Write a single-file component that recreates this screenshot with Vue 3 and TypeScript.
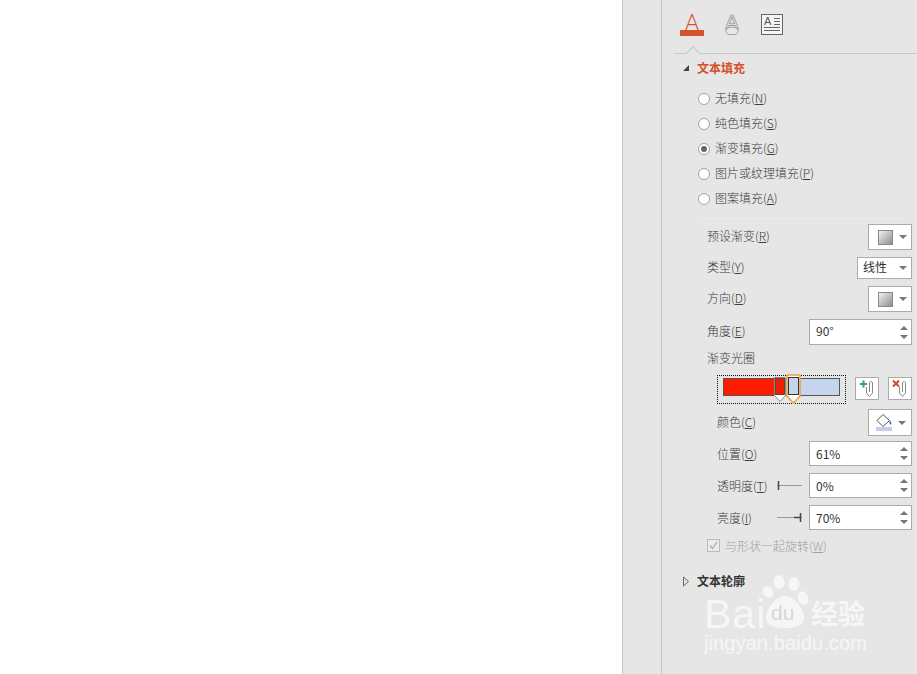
<script setup lang="ts">
interface FillOption {
  label: string;
  key: string;
  checked?: boolean;
}

interface SpinRow {
  label: string;
  key: string;
  value: string;
  slider?: "low" | "high";
}

const fillOptions: FillOption[] = [
  { label: "无填充", key: "N" },
  { label: "纯色填充", key: "S" },
  { label: "渐变填充", key: "G", checked: true },
  { label: "图片或纹理填充", key: "P" },
  { label: "图案填充", key: "A" },
];

const spinRows: SpinRow[] = [
  { label: "位置", key: "O", value: "61%" },
  { label: "透明度", key: "T", value: "0%", slider: "low" },
  { label: "亮度", key: "I", value: "70%", slider: "high" },
];
</script>

<template>
  <div class="page">
    <div class="canvas"></div>
    <div class="strip"></div>
    <aside class="panel">
      <div class="tabs">
        <div class="tab-fill">
          <span class="big-a">A</span>
          <span class="big-a-bar"></span>
        </div>
        <svg class="tab-icon" width="18" height="24" viewBox="0 0 18 24">
          <text x="9" y="17" text-anchor="middle" class="outline-a">A</text>
          <path d="M2.500 19l2.500-3.500h8l2.500 3.500-2.500 3.500H5z" fill="none" stroke="#a8a8a8" />
        </svg>
        <svg class="tab-icon box-icon" width="22" height="21" viewBox="0 0 22 21">
          <rect x="0.500" y="0.500" width="21" height="20" fill="#f4f4f4" stroke="#666" />
          <text x="3" y="11" class="box-a">A</text>
          <path d="M13 4.500h6M13 7.500h6M13 10.500h6M3 13.500h16M3 16.500h16" stroke="#666" fill="none" />
        </svg>
        <span class="notch"></span>
      </div>

      <div class="section-head open">
        <svg width="8" height="8" viewBox="0 0 8 8"><path d="M7 1v6H1z" fill="#444" /></svg>
        <b>文本填充</b>
      </div>

      <div class="options">
        <div v-for="opt in fillOptions" :key="opt.key" class="option">
          <span class="radio" :class="{ on: opt.checked }"></span>
          <span class="option-text">{{ opt.label }}(<u>{{ opt.key }}</u>)</span>
        </div>
      </div>
      <div class="faint-line"></div>

      <div class="form">
        <div class="row">
          <span class="row-label">预设渐变(<u>R</u>)</span>
          <div class="pick">
            <span class="swatch"></span>
            <span class="caret"></span>
          </div>
        </div>
        <div class="row">
          <span class="row-label">类型(<u>Y</u>)</span>
          <div class="select">
            <span class="row-label">线性</span>
            <span class="caret"></span>
          </div>
        </div>
        <div class="row">
          <span class="row-label">方向(<u>D</u>)</span>
          <div class="pick">
            <span class="swatch"></span>
            <span class="caret"></span>
          </div>
        </div>
        <div class="row angle">
          <span class="row-label">角度(<u>E</u>)</span>
          <div class="spin">
            <span class="row-label">90°</span>
            <span class="arrows"><i class="up"></i><i class="down"></i></span>
          </div>
        </div>
        <div class="stops-label">渐变光圈</div>

        <div class="stops-row">
          <div class="stops">
            <div class="bar">
              <span class="bar-red"></span>
              <span class="bar-blue"></span>
            </div>
            <svg class="stop stop-a" width="12" height="26" viewBox="0 0 12 26">
              <path d="M0.500 0.500h11v18l-5.500 6-5.500-6z" fill="#fff" stroke="#8a8a8a" />
              <rect x="1.500" y="1.500" width="9" height="16" fill="#f41c00" stroke="#333" stroke-width="0.800" />
            </svg>
            <svg class="stop stop-b" width="15" height="30" viewBox="0 0 15 30">
              <path d="M1 1h13v21l-6.500 7L1 22z" fill="#fff" stroke="#eba23e" stroke-width="1.600" />
              <rect x="2.500" y="3.500" width="10" height="17" fill="#c5d5ee" stroke="#333" />
            </svg>
          </div>
          <div class="stop-btn">
            <svg width="19" height="19" viewBox="0 0 19 19">
              <path d="M2 5h7M5.500 1.500v7" stroke="#3a9a88" stroke-width="2" fill="none" />
              <path d="M8.500 8v6l3 3.500 3-3.500V4c0-2-3-2-3 0v9" stroke="#888" fill="none" />
            </svg>
          </div>
          <div class="stop-btn">
            <svg width="19" height="19" viewBox="0 0 19 19">
              <path d="M2 1.500l6 6M8 1.500l-6 6" stroke="#d9452c" stroke-width="2" fill="none" />
              <path d="M8.500 8v6l3 3.500 3-3.500V4c0-2-3-2-3 0v9" stroke="#888" fill="none" />
            </svg>
          </div>
        </div>

        <div class="row inner color-row">
          <span class="row-label">颜色(<u>C</u>)</span>
          <div class="pick">
            <svg width="19" height="19" viewBox="0 0 19 19">
              <path d="M8 1.500l6.500 6-6.500 6-6-6z" fill="#fff" stroke="#555" />
              <path d="M14.500 7c1.500 1.500 2.500 3.500 1.500 4.500s-2-2-1.500-4.500z" fill="#2a6fb5" />
              <rect x="1" y="14" width="16" height="4" fill="#c9cce8" />
            </svg>
            <span class="caret"></span>
          </div>
        </div>

        <div v-for="row in spinRows" :key="row.key" class="row inner spin-row">
          <span>{{ row.label }}(<u>{{ row.key }}</u>)</span>
          <div class="spin-wrap">
            <svg v-if="row.slider" class="slider" width="26" height="11" viewBox="0 0 26 11">
              <path d="M0 5.500h25" stroke="#999" fill="none" />
              <path
                :d="row.slider === 'low' ? 'M1.500 1v9' : 'M23.500 1v9M17 5.500h6'"
                stroke="#444"
                stroke-width="1.500"
                fill="none"
              />
            </svg>
            <div class="spin">
              <span>{{ row.value }}</span>
              <span class="arrows"><i class="up"></i><i class="down"></i></span>
            </div>
          </div>
        </div>

        <div class="rotate">
          <svg width="13" height="13" viewBox="0 0 13 13">
            <rect x="0.500" y="0.500" width="12" height="12" fill="#ececec" stroke="#bbb" />
            <path d="M3 6.500l2.500 3L10 3" stroke="#aaa" stroke-width="1.200" fill="none" />
          </svg>
          <span>与形状一起旋转(<u>W</u>)</span>
        </div>
      </div>

      <div class="section-head closed">
        <svg width="8" height="11" viewBox="0 0 8 11"><path d="M1.500 1l5 4.500-5 4.500z" fill="none" stroke="#666" /></svg>
        <b>文本轮廓</b>
      </div>

      <div class="watermark">
        <div class="mark-top">
          <span class="mark-bai">Bai</span>
          <div class="paw">
            <svg width="46" height="54" viewBox="0 0 46 54">
              <ellipse cx="17" cy="7" rx="5.500" ry="7" />
              <ellipse cx="32" cy="9" rx="5.500" ry="7" />
              <ellipse cx="6" cy="17" rx="5" ry="6" transform="rotate(-25 6 17)" />
              <ellipse cx="41" cy="23" rx="5" ry="7" transform="rotate(-20 41 23)" />
              <path d="M23 21c9 0 19 12 19 22 0 8-9 10-19 10S4 51 4 43c0-10 10-22 19-22z" />
            </svg>
            <span class="mark-du">du</span>
          </div>
          <span class="mark-cn">经验</span>
        </div>
        <div class="mark-url">jingyan.baidu.com</div>
      </div>
    </aside>
  </div>
</template>

<style scoped>
.page {
  display: flex;
  width: 917px;
  height: 674px;
  overflow: hidden;
  background: #e6e6e6;
  font-family: "Noto Sans CJK SC", "Liberation Sans", sans-serif;
  font-size: 12px;
  font-weight: 300;
  color: #3c3c3c;
}

u {
  text-underline-offset: 1px;
}

.canvas {
  width: 622px;
  flex: none;
  background: #fff;
}

.strip {
  width: 38px;
  flex: none;
  border-left: 1px solid #c6c6c6;
}

.panel {
  position: relative;
  flex: 1;
  border-left: 1px solid #c6c6c6;
}

.tabs {
  position: relative;
  display: flex;
  align-items: flex-start;
  height: 41px;
  margin-left: 12px;
  padding: 12px 0 0 6px;
  border-bottom: 1px solid #c8c8c8;
}

.tab-fill {
  display: flex;
  flex-direction: column;
  width: 24px;
}

.big-a {
  height: 18px;
  font-family: "Open Sans", sans-serif;
  font-size: 25px;
  font-weight: 300;
  line-height: 20px;
  text-align: center;
  color: #d4532b;
}

.big-a-bar {
  height: 6px;
  background: #d4532b;
}

.tab-icon {
  margin-left: 19px;
}

.box-icon {
  margin-left: 20px;
  margin-top: 2px;
}

.outline-a {
  font-family: "Liberation Sans", sans-serif;
  font-size: 20px;
  fill: #f2f2f2;
  stroke: #8a8a8a;
  stroke-width: 0.700;
}

.box-a {
  font-family: "Liberation Sans", sans-serif;
  font-size: 11px;
  fill: #555;
}

.notch {
  position: absolute;
  left: 14px;
  bottom: -5px;
  width: 9px;
  height: 9px;
  background: #e6e6e6;
  border-top: 1px solid #c8c8c8;
  border-left: 1px solid #c8c8c8;
  transform: rotate(45deg);
}

.section-head {
  display: flex;
  align-items: center;
  gap: 7px;
  height: 27px;
  padding-left: 20px;
}

.section-head b {
  font-weight: 700;
  font-size: 12px;
  padding-bottom: 1px;
}

.section-head.open {
  color: #d2502a;
}

.section-head.closed {
  margin-top: 18px;
  height: 20px;
  color: #333;
}

.options {
  margin-top: 5px;
  padding-left: 36px;
}

.option {
  display: flex;
  align-items: center;
  gap: 5px;
  height: 25px;
}

.option-text {
  padding-bottom: 2px;
}

.radio {
  position: relative;
  width: 10px;
  height: 10px;
  border: 1px solid #a2a2a2;
  border-radius: 50%;
  background: #fff;
}

.radio.on::after {
  content: "";
  position: absolute;
  left: 2px;
  top: 2px;
  width: 6px;
  height: 6px;
  border-radius: 50%;
  background: #666;
}

.faint-line {
  height: 1px;
  margin: 7px 12px 0 36px;
  background: #ebebeb;
}

.form {
  padding: 5px 5px 0 45px;
}

.row {
  display: flex;
  align-items: center;
  justify-content: space-between;
  height: 26px;
  margin-bottom: 5px;
}

.row-label {
  padding-bottom: 3px;
}

.row.angle {
  margin-top: 7px;
  margin-bottom: 0;
}

.row.inner {
  margin-left: 10px;
}

.pick,
.select,
.spin,
.stop-btn {
  display: flex;
  align-items: center;
  box-sizing: border-box;
  background: #fff;
  border: 1px solid #ababab;
}

.pick {
  gap: 6px;
  width: 44px;
  height: 26px;
  padding-left: 9px;
}

.swatch {
  width: 13px;
  height: 13px;
  border: 1px solid #888;
  background: linear-gradient(135deg, #f2f2f2, #8f8f8f);
}

.select {
  justify-content: space-between;
  width: 55px;
  height: 22px;
  padding: 0 4px 0 5px;
  color: #333;
  font-weight: 400;
}

.caret {
  width: 0;
  height: 0;
  border-left: 4px solid transparent;
  border-right: 4px solid transparent;
  border-top: 4px solid #777;
}

.spin {
  justify-content: space-between;
  width: 103px;
  height: 26px;
  padding: 0 3px 0 6px;
  color: #333;
  font-weight: 400;
}

.arrows {
  display: flex;
  flex-direction: column;
  gap: 5px;
}

.arrows i {
  width: 0;
  height: 0;
  border-left: 4px solid transparent;
  border-right: 4px solid transparent;
}

.arrows .up {
  border-bottom: 4px solid #777;
}

.arrows .down {
  border-top: 4px solid #777;
}

.stops-label {
  height: 16px;
  margin-top: 5px;
  line-height: 16px;
}

.stops-row {
  display: flex;
  align-items: flex-start;
  height: 29px;
  margin: 9px 0 5px 10px;
}

.stops {
  position: relative;
  box-sizing: border-box;
  width: 129px;
  height: 29px;
  padding: 2px 5px;
  border: 1px dotted #111;
}

.bar {
  display: flex;
  box-sizing: border-box;
  height: 18px;
  border: 1px solid #555;
  background: #fff;
}

.bar-red {
  width: 52px;
  background: #ff1c00;
}

.bar-blue {
  flex: 1;
  background: #c5d5ee;
}

.stop {
  position: absolute;
}

.stop-a {
  left: 56px;
  top: 1px;
}

.stop-b {
  left: 68px;
  top: -2px;
}

.stop-btn {
  justify-content: center;
  width: 24px;
  height: 23px;
  margin: 2px 0 0 9px;
}

.color-row {
  height: 27px;
}

.color-row .pick {
  height: 27px;
  gap: 4px;
  padding-left: 6px;
}

.spin-row {
  height: 25px;
  margin-bottom: 7px;
}

.spin-row .spin {
  height: 25px;
}

.spin-wrap {
  display: flex;
  align-items: center;
  gap: 6px;
}

.rotate {
  display: flex;
  align-items: center;
  gap: 5px;
  height: 16px;
  color: #a0a0a0;
}

.watermark {
  position: absolute;
  left: 42px;
  top: 575px;
  color: #f6f6f6;
  font-family: "Liberation Sans", sans-serif;
  font-weight: 400;
}

.mark-top {
  display: flex;
  align-items: flex-end;
  height: 54px;
}

.mark-bai {
  width: 58px;
  font-size: 41px;
  line-height: 30px;
  letter-spacing: 1px;
}

.paw {
  position: relative;
  width: 46px;
  height: 54px;
  margin-right: 3px;
}

.paw svg {
  display: block;
  fill: #f6f6f6;
}

.mark-du {
  position: absolute;
  left: 9px;
  bottom: 5px;
  font-size: 21px;
  line-height: 22px;
  color: #d6d6d6;
}

.mark-cn {
  font-family: "Noto Sans CJK SC", sans-serif;
  font-size: 27px;
  line-height: 33px;
  font-weight: 700;
}

.mark-url {
  margin-top: 2px;
  font-size: 20px;
  line-height: 24px;
  letter-spacing: 0.100px;
}
</style>

<style>
html,
body {
  margin: 0;
  background: #fff;
}
</style>
